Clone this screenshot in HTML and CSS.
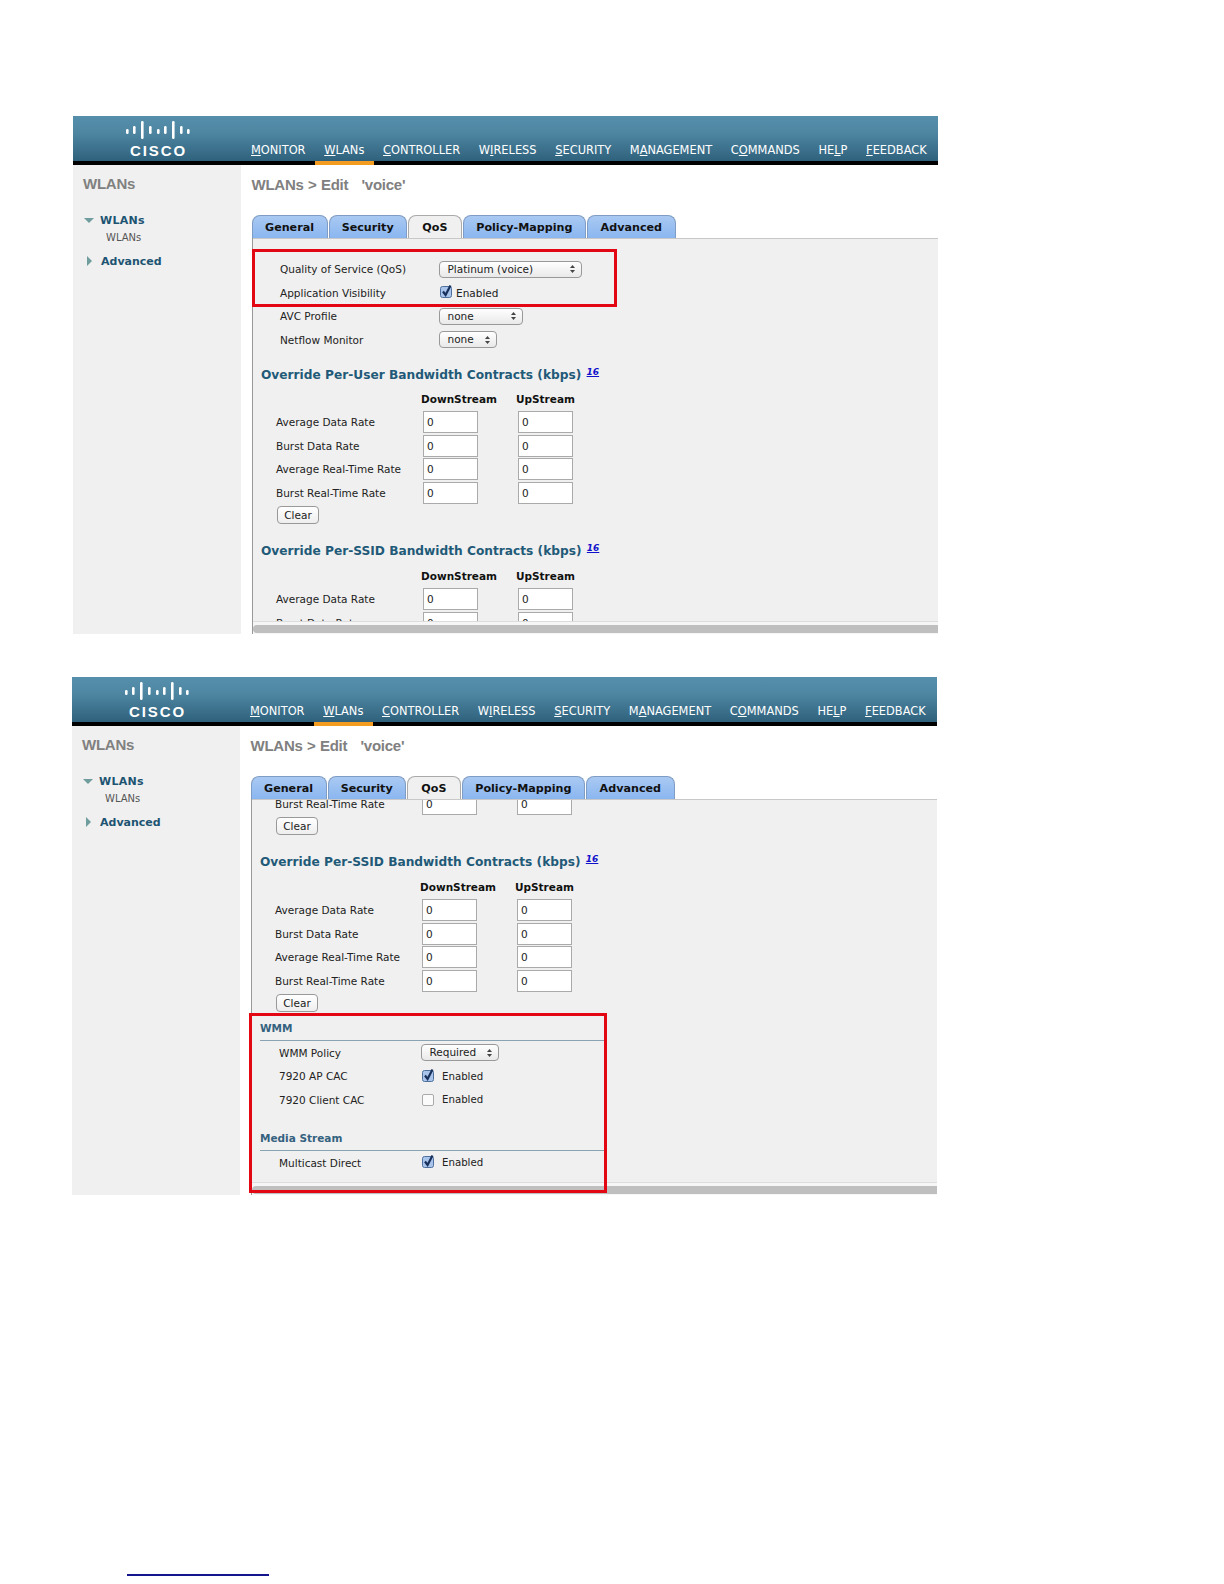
FILE: index.html
```html
<!DOCTYPE html>
<html lang="en">
<head>
<meta charset="utf-8">
<title>WLANs Edit voice</title>
<link rel="stylesheet" href="styles.css">
</head>
<body>
<svg class="defs" width="0" height="0" aria-hidden="true">
  <defs>
    <g id="bars" fill="#fff">
      <rect x="0" y="8" width="2.6" height="5" rx="1.2"/>
      <rect x="7" y="5" width="2.6" height="8" rx="1.2"/>
      <rect x="15" y="0" width="2.6" height="18" rx="1.2"/>
      <rect x="23" y="5" width="2.6" height="8" rx="1.2"/>
      <rect x="31" y="8" width="2.6" height="5" rx="1.2"/>
      <rect x="38" y="5" width="2.6" height="8" rx="1.2"/>
      <rect x="46" y="0" width="2.6" height="18" rx="1.2"/>
      <rect x="54" y="5" width="2.6" height="8" rx="1.2"/>
      <rect x="61" y="8" width="2.6" height="5" rx="1.2"/>
    </g>
    <g id="updown" fill="#444">
      <path d="M2.5 0 L5 3 H0 Z"/>
      <path d="M0 5 H5 L2.5 8 Z"/>
    </g>
    <g id="check">
      <rect x="0.5" y="2.5" width="11" height="11" rx="2" fill="#a9c4ea" stroke="#4f6f9f"/>
      <path d="M3 7.5 L5.6 11 L10.5 1.5" fill="none" stroke="#17305c" stroke-width="2.2"/>
    </g>
  </defs>
</svg>

<main class="page">
  <section class="shot">
    <header class="topbar">
      <div class="logo">
        <svg class="logo-bars" width="64" height="18" viewBox="0 0 64 18"><use href="#bars"/></svg>
        <div class="logo-word">CISCO</div>
      </div>
      <nav class="nav">
        <a class="nav-item"><u>M</u>ONITOR</a>
        <a class="nav-item nav-item-on"><u>W</u>LANs</a>
        <a class="nav-item"><u>C</u>ONTROLLER</a>
        <a class="nav-item">W<u>I</u>RELESS</a>
        <a class="nav-item"><u>S</u>ECURITY</a>
        <a class="nav-item">M<u>A</u>NAGEMENT</a>
        <a class="nav-item">C<u>O</u>MMANDS</a>
        <a class="nav-item">HE<u>L</u>P</a>
        <a class="nav-item"><u>F</u>EEDBACK</a>
      </nav>
    </header>
    <div class="body">
      <aside class="side">
        <h2 class="side-title">WLANs</h2>
        <div class="tree-open"><span class="tri-down"></span>WLANs</div>
        <div class="tree-sub">WLANs</div>
        <div class="tree-closed"><span class="tri-right"></span>Advanced</div>
      </aside>
      <div class="content">
        <h1 class="title">WLANs &gt; Edit &nbsp;&nbsp;'voice'</h1>
        <div class="tabs">
          <span class="tab tab-general">General</span><span class="tab tab-security">Security</span><span class="tab tab-qos tab-on">QoS</span><span class="tab tab-policy">Policy-Mapping</span><span class="tab tab-adv">Advanced</span>
        </div>
        <div class="pane">
          <div class="panel panel-top">
            <div class="row"><span class="lbl">Quality of Service (QoS)</span><span class="sel sel-plat">Platinum (voice)<svg class="arrows" width="5" height="8"><use href="#updown"/></svg></span></div>
            <div class="row"><span class="lbl">Application Visibility</span><svg class="cb" width="12" height="14"><use href="#check"/></svg><span class="en">Enabled</span></div>
            <div class="row"><span class="lbl">AVC Profile</span><span class="sel sel-avc">none<svg class="arrows" width="5" height="8"><use href="#updown"/></svg></span></div>
            <div class="row"><span class="lbl">Netflow Monitor</span><span class="sel sel-net">none<svg class="arrows" width="5" height="8"><use href="#updown"/></svg></span></div>

            <h3 class="sec">Override Per-User Bandwidth Contracts (kbps) <a class="note">16</a></h3>
            <div class="heads"><span>DownStream</span><span>UpStream</span></div>
            <div class="rate"><span class="rlbl">Average Data Rate</span><input class="num" value="0"><input class="num" value="0"></div>
            <div class="rate"><span class="rlbl">Burst Data Rate</span><input class="num" value="0"><input class="num" value="0"></div>
            <div class="rate"><span class="rlbl">Average Real-Time Rate</span><input class="num" value="0"><input class="num" value="0"></div>
            <div class="rate"><span class="rlbl">Burst Real-Time Rate</span><input class="num" value="0"><input class="num" value="0"></div>
            <button class="clear">Clear</button>

            <h3 class="sec sec-ssid">Override Per-SSID Bandwidth Contracts (kbps) <a class="note">16</a></h3>
            <div class="heads"><span>DownStream</span><span>UpStream</span></div>
            <div class="rate"><span class="rlbl">Average Data Rate</span><input class="num" value="0"><input class="num" value="0"></div>
            <div class="rate"><span class="rlbl">Burst Data Rate</span><input class="num" value="0"><input class="num" value="0"></div>
          </div>
          <div class="scroll"><div class="thumb"></div></div>
        </div>
      </div>
    </div>
    <div class="redbox redbox-a"></div>
  </section>

  <section class="shot shot-b">
    <header class="topbar">
      <div class="logo">
        <svg class="logo-bars" width="64" height="18" viewBox="0 0 64 18"><use href="#bars"/></svg>
        <div class="logo-word">CISCO</div>
      </div>
      <nav class="nav">
        <a class="nav-item"><u>M</u>ONITOR</a>
        <a class="nav-item nav-item-on"><u>W</u>LANs</a>
        <a class="nav-item"><u>C</u>ONTROLLER</a>
        <a class="nav-item">W<u>I</u>RELESS</a>
        <a class="nav-item"><u>S</u>ECURITY</a>
        <a class="nav-item">M<u>A</u>NAGEMENT</a>
        <a class="nav-item">C<u>O</u>MMANDS</a>
        <a class="nav-item">HE<u>L</u>P</a>
        <a class="nav-item"><u>F</u>EEDBACK</a>
      </nav>
    </header>
    <div class="body">
      <aside class="side">
        <h2 class="side-title">WLANs</h2>
        <div class="tree-open"><span class="tri-down"></span>WLANs</div>
        <div class="tree-sub">WLANs</div>
        <div class="tree-closed"><span class="tri-right"></span>Advanced</div>
      </aside>
      <div class="content">
        <h1 class="title">WLANs &gt; Edit &nbsp;&nbsp;'voice'</h1>
        <div class="tabs">
          <span class="tab tab-general">General</span><span class="tab tab-security">Security</span><span class="tab tab-qos tab-on">QoS</span><span class="tab tab-policy">Policy-Mapping</span><span class="tab tab-adv">Advanced</span>
        </div>
        <div class="pane">
          <div class="panel panel-scrolled">
            <div class="rate rate-clipped"><span class="rlbl">Burst Real-Time Rate</span><input class="num" value="0"><input class="num" value="0"></div>
            <button class="clear">Clear</button>

            <h3 class="sec sec-ssid">Override Per-SSID Bandwidth Contracts (kbps) <a class="note">16</a></h3>
            <div class="heads"><span>DownStream</span><span>UpStream</span></div>
            <div class="rate"><span class="rlbl">Average Data Rate</span><input class="num" value="0"><input class="num" value="0"></div>
            <div class="rate"><span class="rlbl">Burst Data Rate</span><input class="num" value="0"><input class="num" value="0"></div>
            <div class="rate"><span class="rlbl">Average Real-Time Rate</span><input class="num" value="0"><input class="num" value="0"></div>
            <div class="rate"><span class="rlbl">Burst Real-Time Rate</span><input class="num" value="0"><input class="num" value="0"></div>
            <button class="clear">Clear</button>

            <h4 class="sub sub-wmm">WMM</h4>
            <div class="row row-b"><span class="lbl">WMM Policy</span><span class="sel sel-req">Required<svg class="arrows" width="5" height="8"><use href="#updown"/></svg></span></div>
            <div class="row row-b"><span class="lbl">7920 AP CAC</span><svg class="cb" width="12" height="14"><use href="#check"/></svg><span class="en en-b">Enabled</span></div>
            <div class="row row-b"><span class="lbl">7920 Client CAC</span><span class="cb-off"></span><span class="en en-b">Enabled</span></div>
            <h4 class="sub sub-media">Media Stream</h4>
            <div class="row row-b"><span class="lbl">Multicast Direct</span><svg class="cb" width="12" height="14"><use href="#check"/></svg><span class="en en-b">Enabled</span></div>
          </div>
          <div class="scroll"><div class="thumb"></div></div>
        </div>
      </div>
    </div>
    <div class="redbox redbox-b"></div>
  </section>

  <div class="footlink"></div>
</main>
</body>
</html>
```
FILE: styles.css
```css
* { box-sizing: border-box; }
html, body { margin: 0; background: #fff; }
body { font-family: "DejaVu Sans", Verdana, sans-serif; color: #222; }
.defs { position: absolute; }
.page { padding: 116px 0 0 73px; height: 1584px; overflow: hidden; }

.shot { position: relative; width: 865px; height: 518px; display: flex; flex-direction: column; }
.shot-b { margin: 43px 0 0 -1px; }

.topbar { height: 49px; flex: none; display: flex; background: linear-gradient(#558fab, #4f87a3 35%, #2f617c); border-bottom: 4px solid #000; }
.logo { width: 168.5px; flex: none; padding: 5px 0 0 53px; }
.logo-bars { display: block; }
.logo-word { font: bold 15px/16px "Liberation Sans", Arial, sans-serif; letter-spacing: 1.9px; color: #fff; padding-left: 4px; margin-top: 4px; }
.nav { display: flex; align-items: flex-end; height: 49px; }
.nav-item { font-size: 11.4px; line-height: 14px; height: 49px; padding: 27px 9.35px 0; color: #fff; white-space: nowrap; border-bottom: 4px solid transparent; }
.nav-item:first-child { padding-left: 9.5px; }
.nav-item-on { border-bottom-color: #f39c1f; }

.body { flex: 1; min-height: 0; display: flex; }
.side { width: 168px; flex: none; background: #f0f0f0; padding: 10px 0 0 10px; }
.side-title { margin: 0; font: bold 15px/18px "Liberation Sans", Arial, sans-serif; letter-spacing: -.25px; color: #808080; }
.tree-open { margin-top: 20px; font-size: 11px; font-weight: bold; line-height: 16px; color: #1d5472; display: flex; align-items: center; letter-spacing: .3px; }
.tri-down { width: 0; height: 0; border: 5px solid transparent; border-top: 5px solid #6f9c9c; border-bottom: 0; margin: 0 6px 2px 1px; }
.tree-sub { font-size: 10px; line-height: 14px; color: #555; padding: 2px 0 1px 23px; }
.tree-closed { margin-top: 7px; font-size: 11px; font-weight: bold; line-height: 18px; color: #1d5472; display: flex; align-items: center; }
.tri-right { width: 0; height: 0; border: 5px solid transparent; border-left: 5px solid #6f9c9c; border-right: 0; margin: 0 9px 2px 4px; }

.content { flex: 1; min-width: 0; display: flex; flex-direction: column; padding-left: 10.5px; }
.title { margin: 0; flex: none; height: 50px; padding-top: 11px; font: bold 15px/18px "Liberation Sans", Arial, sans-serif; letter-spacing: -.25px; word-spacing: .5px; color: #808080; }
.tabs { flex: none; height: 23px; display: flex; align-items: flex-end; font-size: 11.15px; font-weight: bold; color: #111; }
.tab { height: 23px; line-height: 23px; text-align: center; background: linear-gradient(#a9c9f2, #8ab6f0); border: 1px solid #7f9cc4; border-bottom: 0; border-radius: 8px 8px 0 0; margin-right: 1.2px; white-space: nowrap; }
.tab-on { background: #f0f0f0; border-color: #aaa; }
.tab-general { width: 76px; }
.tab-security { width: 78px; }
.tab-qos { width: 54px; }
.tab-policy { width: 122.6px; }
.tab-adv { width: 89px; }

.pane { flex: 1; min-height: 0; display: flex; flex-direction: column; border-left: 1px solid #999; }
.panel { flex: 1; min-height: 0; overflow: hidden; background: #f0f0f0; border-top: 1px solid #c8c8c8; border-bottom: 1px solid #ddd; font-size: 10.5px; }
.panel-top { padding-top: 18.5px; }
.scroll { flex: none; height: 12px; padding-top: 3px; background: #f6f6f6; }
.thumb { height: 8px; background: #bfbfbf; border-radius: 4px 0 0 4px; }

.row { display: flex; align-items: center; height: 23.5px; padding-left: 27.5px; }
.lbl { width: 159px; flex: none; white-space: nowrap; }
.row-b .lbl { width: 142px; }
.sel { position: relative; display: block; height: 17px; line-height: 15px; padding-left: 7.5px; background: linear-gradient(#fff, #e9e9e9); border: 1px solid #999; border-radius: 4px; }
.arrows { position: absolute; top: 3.5px; right: 6px; }
.sel-plat { width: 143px; }
.sel-avc { width: 84px; }
.sel-net { width: 58px; }
.sel-req { width: 78px; }
.cb { flex: none; margin: -3px 4px 0 1px; }
.cb-off { width: 12px; height: 12px; margin: 0 4px 0 1px; flex: none; background: #fbfbfb; border: 1px solid #aaa; border-radius: 2px; }
.en { white-space: nowrap; }
.en-b { padding-left: 4px; font-size: 10.2px; }

.sec { margin: 10px 0 0 8.5px; height: 20px; font-size: 12.2px; line-height: 20px; font-weight: bold; color: #1f5a78; white-space: nowrap; }
.note { font-size: 9px; font-style: italic; color: #1111cc; text-decoration: underline; vertical-align: 4px; margin-left: 1px; }
.sec-ssid { margin-top: 14.5px; }
.heads { display: flex; height: 23px; margin-top: 6px; padding-left: 168.5px; font-size: 10.5px; font-weight: bold; line-height: 23px; color: #111; }
.sec-ssid + .heads { margin-top: 6.5px; }
.heads span:first-child { width: 95px; }
.rate { display: flex; align-items: center; height: 23.5px; padding-left: 23.5px; }
.rlbl { width: 147px; flex: none; white-space: nowrap; }
.num { width: 55px; height: 22px; padding: 0 0 0 3px; margin-right: 40px; flex: none; font: 10.5px "DejaVu Sans", Verdana, sans-serif; color: #222; background: #fff; border: 1px solid #aaa; border-radius: 0; outline: 0; }
.clear { display: block; width: 42px; height: 18px; margin: 1px 0 0 24.5px; padding: 0; font: 10.5px "DejaVu Sans", Verdana, sans-serif; color: #222; background: linear-gradient(#fff, #eee); border: 1px solid #999; border-radius: 4px; }
.panel-scrolled { margin: 0; }
.rate-clipped { margin-top: -8px; }
.sub { margin: 0 0 0 8.5px; width: 344px; font-size: 10.5px; font-weight: bold; line-height: 14px; color: #34627f; border-bottom: 1px solid #8aa3b3; }
.sub-wmm { margin-top: 9.5px; padding-bottom: 5px; height: 20px; }
.sub-media { margin-top: 19.5px; padding-bottom: 5px; height: 20px; }

.redbox { position: absolute; border: 3px solid #e30613; }
.redbox-a { left: 179px; top: 133px; width: 365px; height: 58px; }
.redbox-b { left: 177px; top: 336px; width: 358px; height: 180px; }

.footlink { width: 142px; height: 2px; margin: 379px 0 0 54px; background: #14148c; }
```
